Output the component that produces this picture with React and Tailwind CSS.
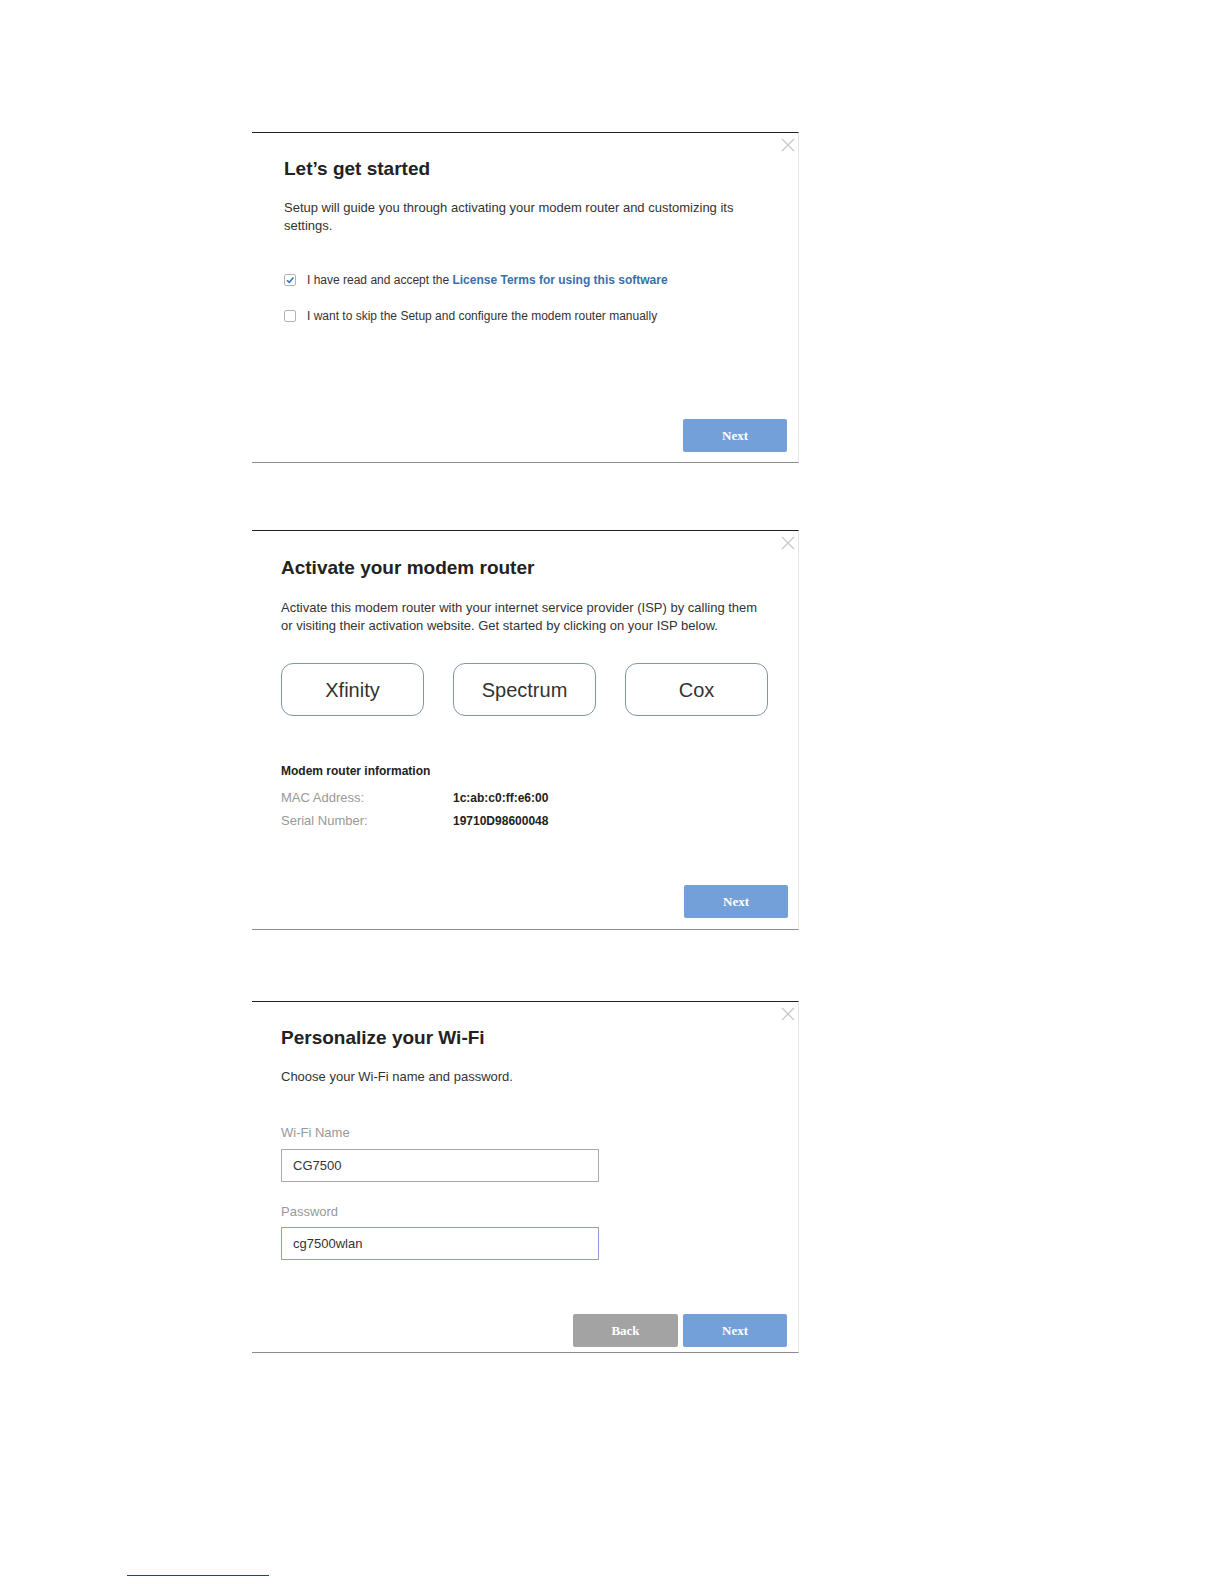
const sans = "font-['Liberation_Sans',Arial,sans-serif]";
const serif = "font-['Liberation_Serif','Times_New_Roman',serif]";

function CloseIcon() {
  return (
    <svg width="14" height="14" viewBox="0 0 14 14" className="absolute right-[3px] top-[5px]">
      <path d="M1 1 L13 13 M13 1 L1 13" stroke="#c8c8c8" strokeWidth="1.3" fill="none" />
    </svg>
  );
}

function Checkbox({ checked }) {
  return (
    <span className="w-[12px] h-[12px] border border-[#b4b4b4] rounded-[2px] bg-white flex items-center justify-center shrink-0">
      {checked && (
        <svg width="10" height="10" viewBox="0 0 10 10">
          <path d="M2 5.2 L4.2 7.4 L8.4 2.4" stroke="#2f74c9" strokeWidth="1.6" fill="none" />
        </svg>
      )}
    </span>
  );
}

function NextButton({ className = "" }) {
  return (
    <button
      className={`w-[104px] h-[33px] bg-[#73a0d8] rounded-[2px] text-white text-[13px] font-bold ${serif} ${className}`}
    >
      Next
    </button>
  );
}

function Panel({ children, className = "" }) {
  return (
    <div
      className={`relative ml-[252px] w-[547px] border-t border-t-[#222] border-b border-b-[#8c8c8c] border-r border-r-[#e6e6e6] bg-white ${className}`}
    >
      <CloseIcon />
      {children}
    </div>
  );
}

function GetStarted() {
  return (
    <Panel className="pl-[32px] pr-[11px] pb-[10px] flex flex-col">
      <h2 className="mt-[24px] text-[19px] leading-[24px] font-bold text-[#222]">Let’s get started</h2>
      <p className="mt-[18px] w-[470px] text-[13px] leading-[18px] text-[#333]">
        Setup will guide you through activating your modem router and customizing its settings.
      </p>
      <label className="mt-[36px] h-[18px] flex items-center gap-[11px] text-[12px] text-[#333]">
        <Checkbox checked />
        <span>
          I have read and accept the{" "}
          <span className="text-[#3b6fa8] font-semibold">License Terms for using this software</span>
        </span>
      </label>
      <label className="mt-[18px] h-[18px] flex items-center gap-[11px] text-[12px] text-[#333]">
        <Checkbox />
        <span>I want to skip the Setup and configure the modem router manually</span>
      </label>
      <div className="mt-[94px] flex justify-end">
        <NextButton />
      </div>
    </Panel>
  );
}

function Activate() {
  const isps = ["Xfinity", "Spectrum", "Cox"];
  return (
    <Panel className="mt-[67px] pl-[29px] pr-[10px] pb-[11px] flex flex-col">
      <h2 className="mt-[25px] text-[19px] leading-[24px] font-bold text-[#222]">Activate your modem router</h2>
      <p className="mt-[19px] w-[485px] text-[13px] leading-[18px] text-[#333]">
        Activate this modem router with your internet service provider (ISP) by calling them or visiting their
        activation website. Get started by clicking on your ISP below.
      </p>
      <div className="mt-[28px] flex gap-[29px]">
        {isps.map((isp) => (
          <button
            key={isp}
            className="w-[143px] h-[53px] border border-[#7d97ad] rounded-[12px] text-[20px] text-[#333] bg-white"
          >
            {isp}
          </button>
        ))}
      </div>
      <h3 className="mt-[47px] text-[12px] leading-[16px] font-bold text-[#222]">Modem router information</h3>
      <div className="mt-[10px] flex flex-col gap-[5px]">
        <div className="h-[18px] flex items-center">
          <span className="w-[172px] text-[13px] text-[#999]">MAC Address:</span>
          <span className="text-[12px] font-bold text-[#222]">1c:ab:c0:ff:e6:00</span>
        </div>
        <div className="h-[18px] flex items-center">
          <span className="w-[172px] text-[13px] text-[#999]">Serial Number:</span>
          <span className="text-[12px] font-bold text-[#222]">19710D98600048</span>
        </div>
      </div>
      <div className="mt-[55px] flex justify-end">
        <NextButton />
      </div>
    </Panel>
  );
}

function Personalize() {
  return (
    <Panel className="mt-[71px] pl-[29px] pr-[11px] pb-[5px] flex flex-col bg-[#fdfdfd]">
      <h2 className="mt-[24px] text-[19px] leading-[24px] font-bold text-[#222]">Personalize your Wi-Fi</h2>
      <p className="mt-[18px] text-[13px] leading-[18px] text-[#333]">Choose your Wi-Fi name and password.</p>
      <label className="mt-[38px] text-[13px] leading-[18px] text-[#999]">Wi-Fi Name</label>
      <input
        readOnly
        value="CG7500"
        className="mt-[7px] w-[318px] h-[33px] border border-[#a9a9a9] bg-white px-[11px] text-[13px] text-[#333] outline-none"
      />
      <label className="mt-[21px] text-[13px] leading-[18px] text-[#999]">Password</label>
      <input
        readOnly
        value="cg7500wlan"
        className="mt-[6px] w-[318px] h-[33px] border border-[#8d9fd6] bg-white px-[11px] text-[13px] text-[#333] outline-none"
      />
      <div className="mt-[54px] flex justify-end gap-[5px]">
        <button
          className={`w-[105px] h-[33px] bg-[#a3a3a3] rounded-[2px] text-white text-[13px] font-bold ${serif}`}
        >
          Back
        </button>
        <NextButton />
      </div>
    </Panel>
  );
}

export default function App() {
  return (
    <div className={`w-[1224px] h-[1584px] bg-white pt-[132px] ${sans}`}>
      <GetStarted />
      <Activate />
      <Personalize />
      <div className="mt-[222px] ml-[127px] w-[142px] h-px bg-[#27407f]" />
    </div>
  );
}
